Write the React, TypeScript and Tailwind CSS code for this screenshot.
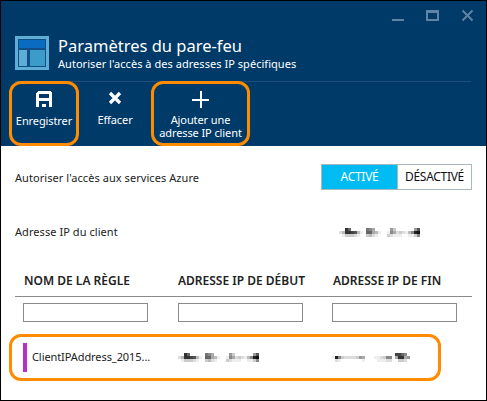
import React from "react";

const font = { fontFamily: '"Noto Sans", "Open Sans", sans-serif' };

function Blur({ rows }: { rows: string[] }) {
  return (
    <svg width={81} height={9} shapeRendering="crispEdges" className="block">
      {rows.map((row, y) =>
        row.split("").map((v, x) => (
          <rect key={`${x}-${y}`} x={x * 3} y={y * 3} width={3} height={3} fill={`#${v}${v}${v}`} />
        ))
      )}
    </svg>
  );
}

const blurA = ["ff36fffff78afffff9cffffff95", "db3345bef66abeffe8adcdeb821", "fecccdeffcbdefffcdeeeffeec8"];
const blurB = ["fffffffffffffffffffff4468ff", "e28cddddc9afffeedc88fa33a9f", "fdefffffffeffffeeeddffccdff"];

export default function App() {
  return (
    <div className="w-[487px] h-[401px] bg-white border border-black flex flex-col overflow-hidden text-[#222]" style={font}>
      <div className="bg-[#003a68] h-[145px] flex flex-col text-white shrink-0">
        <div className="flex justify-end items-start pt-[8px] pr-[12px] h-[34px]">
          <svg width="14" height="13" viewBox="0 0 14 13" className="mr-[20px]"><rect x="1" y="10" width="12" height="2" fill="#5f83a2" /></svg>
          <svg width="15" height="13" viewBox="0 0 15 13" className="mr-[21px]"><rect x="2" y="2" width="11" height="9" fill="none" stroke="#5f83a2" strokeWidth="2" /><rect x="1" y="1" width="13" height="3" fill="#5f83a2" /></svg>
          <svg width="13" height="13" viewBox="0 0 13 13"><path d="M1.500 1.500l10 10M11.500 1.500l-10 10" stroke="#5f83a2" strokeWidth="2" /></svg>
        </div>
        <div className="flex items-start pl-[14px] h-[47px]">
          <svg width="34" height="34" viewBox="0 0 34 34" className="mr-[9px] mt-[1px] shrink-0" shapeRendering="crispEdges">
            <rect width="34" height="34" fill="#5eadd6" />
            <rect x="3" y="3" width="28" height="28" fill="#0f4f85" />
            <rect x="4" y="4" width="26" height="8" fill="#0a6cc0" />
            <rect x="4" y="14" width="8" height="16" fill="#5eadd6" />
            <rect x="15" y="14" width="15" height="16" fill="#3c9bc9" />
          </svg>
          <div className="flex flex-col">
            <div className="text-[16.5px] leading-[22px]">Paramètres du pare-feu</div>
            <div className="text-[11px] leading-[15px] -mt-[1px] tracking-[0.04px]">Autoriser l'accès à des adresses IP spécifiques</div>
          </div>
        </div>
        <div className="h-[1px] bg-[#1d4f7d] ml-[14px] mr-[15px]" />
        <div className="flex text-[11px] leading-[13px] pl-[8px] -tracking-[0.1px]">
          <div className="w-[70px] h-[65px] flex flex-col items-center pt-[7px] border-[3px] border-[#ff8c00] rounded-[12px] -mt-[1px]">
            <svg width="16" height="16" viewBox="0 0 16 16" className="mb-[7px]" shapeRendering="crispEdges">
              <path d="M2 0h12l2 2v14H0V2zM3 3v4h10V3zM3 10v6h3v-3h4v3h3v-6z" fill="#fff" fillRule="evenodd" />
            </svg>
            <span className="whitespace-nowrap">Enregistrer</span>
          </div>
          <div className="w-[72px] flex flex-col items-center pt-[9px]">
            <svg width="14" height="14" viewBox="0 0 14 14" className="mb-[8px]"><path d="M2 2l10 10M12 2L2 12" stroke="#fff" strokeWidth="3.200" /></svg>
            <span>Effacer</span>
          </div>
          <div className="w-[99px] h-[65px] flex flex-col items-center pt-[7px] border-[3px] border-[#ff8c00] rounded-[12px] -mt-[1px]">
            <svg width="17" height="17" viewBox="0 0 17 17" className="mb-[5px]" shapeRendering="crispEdges"><path d="M7.500 0h2v7.500H17v2H9.500V17h-2V9.500H0v-2h7.500z" fill="#fff" /></svg>
            <span className="whitespace-nowrap">Ajouter une</span>
            <span className="whitespace-nowrap">adresse IP client</span>
          </div>
        </div>
      </div>

      <div className="flex-1 flex flex-col text-[11px] tracking-[0.06px]">
        <div className="flex items-center justify-between pl-[14px] pr-[14px] pt-[18px] h-[44px]">
          <span className="mt-[3px]">Autoriser l'accès aux services Azure</span>
          <div className="flex h-[26px] border border-[#a9b8c0] text-[12px] -tracking-[0.3px]">
            <div className="w-[75px] bg-[#00bcf2] text-white flex items-center justify-center">ACTIVÉ</div>
            <div className="w-[74px] border-l border-[#a9b8c0] text-[#111] flex items-center justify-center">DÉSACTIVÉ</div>
          </div>
        </div>
        <div className="flex items-center h-[20px] mt-[32px] pl-[14px]">
          <span className="w-[324px]">Adresse IP du client</span>
          <Blur rows={blurA} />
        </div>

        <div className="mt-[28px] mx-[14px] border-b border-[#8a8a8a] h-[27px] flex items-start pt-[3px] font-semibold text-[12px] leading-[15px] text-[#222] tracking-normal">
          <span className="w-[163px] pl-[9px]">NOM DE LA RÈGLE</span>
          <span className="w-[155px]">ADRESSE IP DE DÉBUT</span>
          <span>ADRESSE IP DE FIN</span>
        </div>
        <div className="flex pl-[22px] gap-[30px] mt-[6px]">
          <div className="w-[125px] h-[19px] border border-[#8a8a8a]" />
          <div className="w-[125px] h-[19px] border border-[#8a8a8a]" />
          <div className="w-[125px] h-[19px] border border-[#8a8a8a] -ml-[1px]" />
        </div>
        <div className="ml-[8px] mt-[12px] w-[432px] h-[47px] border-[3px] border-[#ff8c00] rounded-[12px] flex items-center pl-[11px]">
          <div className="w-[4px] h-[29px] bg-[#b92fc9] mr-[5px]" />
          <span className="w-[146px] text-[#222] -tracking-[0.08px]">ClientIPAddress_2015...</span>
          <div className="w-[154px]"><Blur rows={blurA} /></div>
          <Blur rows={blurB} />
        </div>
      </div>
    </div>
  );
}
